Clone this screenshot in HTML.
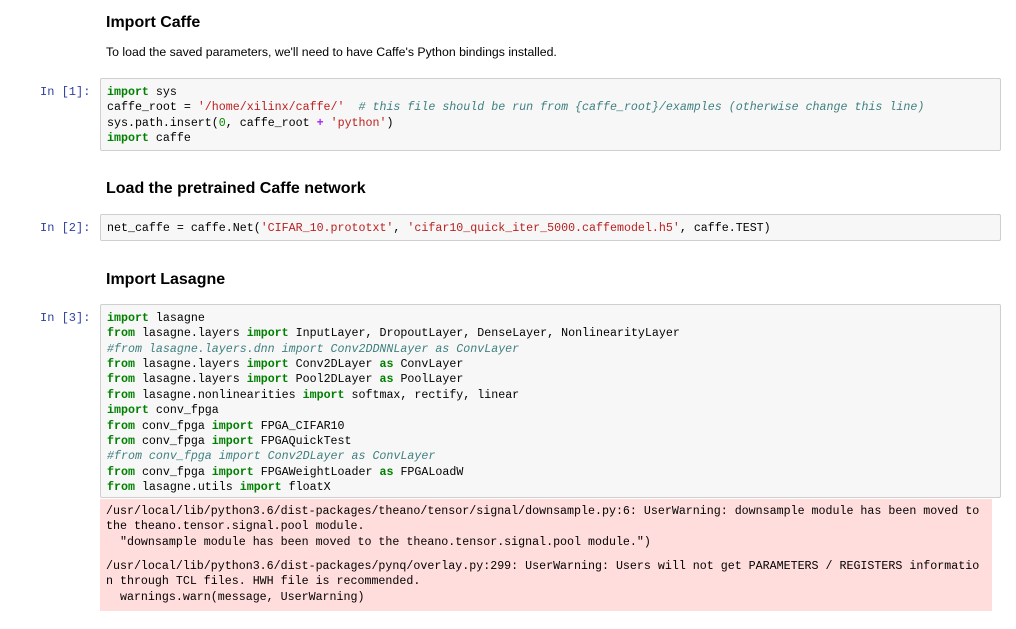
<!DOCTYPE html><html><head><meta charset="utf-8"><style>
body{margin:0;width:1016px;height:629px;background:#fff;position:relative;overflow:hidden;font-family:"Liberation Sans",sans-serif;color:#000}
.h{position:absolute;left:106px;font-weight:bold;font-size:16px}
.p{position:absolute;left:106px;font-size:12.3px}
.pr{position:absolute;left:40px;font-family:"Liberation Mono",monospace;font-size:12px;color:#303F9F}
.c{position:absolute;left:100px;width:901px;background:#f7f7f7;border:1px solid #cfcfcf;border-radius:2px;box-sizing:border-box}
pre{margin:0;font-family:"Liberation Mono",monospace;font-size:11.65px;line-height:15.36px;white-space:pre}
.c pre{position:absolute;left:6px}
.k{color:#008000;font-weight:bold}.s{color:#BA2121}.m{color:#408080;font-style:italic}.n{color:#080}.o{color:#AA22FF;font-weight:bold}
.e{position:absolute;left:100px;width:892px;top:499px;height:112px;background:#fdd}
.e pre{position:absolute;left:6px}
</style></head><body>
<div class="h" style="top:14px">Import Caffe</div>
<div class="p" style="top:45px">To load the saved parameters, we'll need to have Caffe's Python bindings installed.</div>
<div class="pr" style="top:85px">In  [1]:</div>
<div class="c" style="top:78px;height:73px"><pre style="top:6px"><span class="k">import</span> sys
caffe_root = <span class="s">'/home/xilinx/caffe/'</span>  <span class="m"># this file should be run from {caffe_root}/examples (otherwise change this line)</span>
sys.path.insert(<span class="n">0</span>, caffe_root <span class="o">+</span> <span class="s">'python'</span>)
<span class="k">import</span> caffe</pre></div>
<div class="h" style="top:180px">Load the pretrained Caffe network</div>
<div class="pr" style="top:221px">In  [2]:</div>
<div class="c" style="top:214px;height:27px"><pre style="top:6px">net_caffe = caffe.Net(<span class="s">'CIFAR_10.prototxt'</span>, <span class="s">'cifar10_quick_iter_5000.caffemodel.h5'</span>, caffe.TEST)</pre></div>
<div class="h" style="top:271px">Import Lasagne</div>
<div class="pr" style="top:311px">In  [3]:</div>
<div class="c" style="top:304px;height:194px"><pre style="top:6px"><span class="k">import</span> lasagne
<span class="k">from</span> lasagne.layers <span class="k">import</span> InputLayer, DropoutLayer, DenseLayer, NonlinearityLayer
<span class="m">#from lasagne.layers.dnn import Conv2DDNNLayer as ConvLayer</span>
<span class="k">from</span> lasagne.layers <span class="k">import</span> Conv2DLayer <span class="k">as</span> ConvLayer
<span class="k">from</span> lasagne.layers <span class="k">import</span> Pool2DLayer <span class="k">as</span> PoolLayer
<span class="k">from</span> lasagne.nonlinearities <span class="k">import</span> softmax, rectify, linear
<span class="k">import</span> conv_fpga
<span class="k">from</span> conv_fpga <span class="k">import</span> FPGA_CIFAR10
<span class="k">from</span> conv_fpga <span class="k">import</span> FPGAQuickTest
<span class="m">#from conv_fpga import Conv2DLayer as ConvLayer</span>
<span class="k">from</span> conv_fpga <span class="k">import</span> FPGAWeightLoader <span class="k">as</span> FPGALoadW
<span class="k">from</span> lasagne.utils <span class="k">import</span> floatX</pre></div>
<div class="e"><pre style="top:5px">/usr/local/lib/python3.6/dist-packages/theano/tensor/signal/downsample.py:6: UserWarning: downsample module has been moved to
the theano.tensor.signal.pool module.
  "downsample module has been moved to the theano.tensor.signal.pool module.")</pre>
<pre style="top:60px">/usr/local/lib/python3.6/dist-packages/pynq/overlay.py:299: UserWarning: Users will not get PARAMETERS / REGISTERS informatio
n through TCL files. HWH file is recommended.
  warnings.warn(message, UserWarning)</pre></div>
</body></html>
